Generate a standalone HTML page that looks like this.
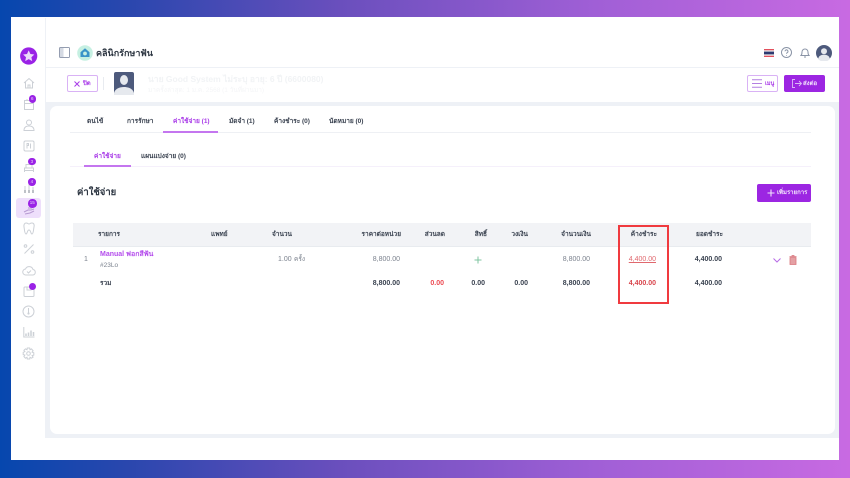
<!DOCTYPE html>
<html lang="th"><head><meta charset="utf-8"><title>คลินิกรักษาฟัน</title>
<style>
*{box-sizing:border-box}
html,body{margin:0;padding:0;width:850px;height:478px;overflow:hidden}
body{background:linear-gradient(90deg,#0647ae 0%,#2a47ae 15%,#6a4fbd 40%,#a05fd6 70%,#c86ae2 100%);font-family:"Liberation Sans","Noto Sans CJK SC",sans-serif;color:#2b3340}
.a{position:absolute}
.t{position:absolute;white-space:nowrap;font-size:7px;line-height:10px;font-weight:700;color:#3a4250;filter:blur(.3px)}
.r{text-align:right}.c{text-align:center}
.g{color:#7b828e;font-weight:400}
.p{color:#a93be8}
.b{position:absolute;width:7.500px;height:7.500px;border-radius:50%;background:#9a22e6;color:#e9d3fa;font-size:4.500px;line-height:7.500px;text-align:center}
svg{filter:blur(.25px)}
svg.i{position:absolute;fill:none;stroke:#ccd0d6;stroke-width:1}
</style></head><body>
<div class="a" style="left:11px;top:17.300px;width:828px;height:443px;background:#fff"></div>
<div class="a" style="left:45px;top:67px;width:794px;height:371px;background:#eef1f6"></div>
<div class="a" style="left:45px;top:18px;width:1px;height:49px;background:#eef1f6"></div>
<div class="a" style="left:46px;top:68px;width:793px;height:34px;background:#fff"></div>
<div class="a" style="left:49.500px;top:106px;width:785.500px;height:328px;background:#fff;border-radius:7px"></div>

<!-- sidebar -->
<svg class="a" style="left:20px;top:47px" width="18" height="18" viewBox="0 0 18 18"><circle cx="8.700" cy="9" r="8.600" fill="#9a22e6"/><path d="M8.700 3.400l1.700 3.600 3.900.5-2.900 2.700.8 3.900-3.500-2-3.500 2 .8-3.900-2.900-2.700 3.900-.5z" fill="#ecd9fb"/></svg>
<svg class="i" style="left:22.500px;top:77px" width="12" height="12" viewBox="0 0 12 12"><path d="M1 6l5-4.500L11 6M2.500 5v6h7V5M5 11V8h2v3"/></svg>
<svg class="i" style="left:23px;top:98px" width="12" height="12" viewBox="0 0 12 12"><path d="M1.500 2.500h9v9h-9zM1.500 5.500h9M4 1v2M8 1v2"/></svg>
<div class="b" style="left:28.500px;top:95px">6</div>
<svg class="i" style="left:22.500px;top:119px" width="12" height="12" viewBox="0 0 12 12"><circle cx="6" cy="3.500" r="2.500"/><path d="M1 11.500c0-3 2-4.500 5-4.500s5 1.500 5 4.500z"/></svg>
<svg class="i" style="left:22.500px;top:140px" width="12" height="12" viewBox="0 0 12 12"><rect x="1" y="1" width="10" height="10" rx="1.500"/><path d="M4 8.500v-5h1.500v2H4M7.500 3.500v5"/></svg>
<svg class="i" style="left:23px;top:161px" width="12" height="12" viewBox="0 0 12 12"><path d="M1.500 11V7h9v4M3 7V3.500h6V7M1 9.500h10"/></svg>
<div class="b" style="left:28.200px;top:157.500px">3</div>
<svg class="i" style="left:22.500px;top:182px" width="12" height="12" viewBox="0 0 12 12"><path d="M2 11V4M6 11V2M10 11V5"/><path d="M2 11V8M6 11V8M10 11V8" stroke="#a8adb6" stroke-width="1.500"/></svg>
<div class="b" style="left:28.200px;top:178.200px">4</div>
<div class="a" style="left:16px;top:198px;width:24.500px;height:19.500px;border-radius:3px;background:#eedffb"></div>
<svg class="i" style="left:23px;top:205px;stroke:#b79ad2" width="12" height="10" viewBox="0 0 12 10"><path d="M1 7l4-2h3l3-1M2 9l5-1 4-2M5 3h4"/></svg>
<div class="b" style="left:28px;top:199px;width:8.500px;height:8.500px;line-height:8.500px">15</div>
<svg class="i" style="left:22.500px;top:222px" width="12" height="13" viewBox="0 0 12 13"><path d="M3 1c2 0 2 1 3 1s1-1 3-1 2.500 2 2 4c-.5 2-.5 7-2 7S8 8 6 8s-1.500 4-3 4-1.500-5-2-7 .5-4 2-4z"/></svg>
<svg class="i" style="left:22.500px;top:243px" width="12" height="12" viewBox="0 0 12 12"><path d="M1.500 10.500l9-9"/><circle cx="2.500" cy="3" r="1.300"/><circle cx="9.500" cy="9" r="1.300"/></svg>
<svg class="i" style="left:22px;top:265px" width="14" height="11" viewBox="0 0 14 11"><path d="M4 10a3 3 0 0 1-.5-6A4 4 0 0 1 11 4.500 2.800 2.800 0 0 1 11 10zM5 6.500l1.500 1.500L9 5.500"/></svg>
<svg class="i" style="left:23px;top:285px" width="12" height="12" viewBox="0 0 12 12"><rect x="1" y="2" width="10" height="9.500" rx="1"/><path d="M4 2v3h4V2"/></svg>
<div class="a" style="left:28.500px;top:282.500px;width:7px;height:7px;border-radius:50%;background:#9a22e6"></div>
<svg class="i" style="left:22px;top:305px" width="13" height="13" viewBox="0 0 13 13"><circle cx="6.500" cy="6.500" r="5.500"/><path d="M6.500 3v4.500"/><circle cx="6.500" cy="8.500" r=".6"/></svg>
<svg class="i" style="left:22.500px;top:326px" width="12" height="12" viewBox="0 0 12 12"><path d="M.8 1v10h10.700"/><path d="M3 10V7.500M5.500 10V6.500M8 10V4.500M10.500 10V6" stroke-width="1.500"/></svg>
<svg class="i" style="left:22px;top:347px" width="13" height="13" viewBox="0 0 13 13"><circle cx="6.500" cy="6.500" r="1.800"/><path d="M5.300 1h2.400l.3 1.700 1.500-.8 1.600 1.900-1 1.300 1.700.7v2.300l-1.700.5 1 1.500L9.500 11.200 8 10.300 7.700 12H5.300L5 10.300l-1.500.9L1.900 9.600l1-1.500L1.200 7.600V5.300l1.700-.7-1-1.300L3.500 1.900 5 2.700z"/></svg>

<!-- top bar -->
<svg class="a" style="left:59px;top:47px" width="11" height="11" viewBox="0 0 11 11"><rect x=".5" y=".5" width="10" height="10" rx="1" fill="#d5dae3" stroke="#949db0"/><rect x="4.500" y="1" width="5.500" height="9" fill="#fff"/></svg>
<svg class="a" style="left:77px;top:45px" width="16" height="16" viewBox="0 0 16 16"><circle cx="8" cy="8" r="7.800" fill="#c6f0e2"/><path d="M8 3.200L3.500 7.200v4.800h9V7.200z" fill="#3a94c8"/><circle cx="8" cy="8.500" r="1.900" fill="#c6f0e2"/></svg>
<div class="t" style="left:96px;top:47px;font-size:9px;line-height:12px;color:#2d3642">คลินิกรักษาฟัน</div>
<svg class="a" style="left:763.500px;top:49px" width="10" height="8" viewBox="0 0 10 8"><rect width="10" height="8" fill="#e2505c"/><rect y="1.300" width="10" height="5.400" fill="#eee"/><rect y="2.600" width="10" height="2.800" fill="#2d3a70"/></svg>
<svg class="a" style="left:781px;top:47px" width="11" height="11" viewBox="0 0 11 11"><circle cx="5.500" cy="5.500" r="5" fill="none" stroke="#8a94a6"/><path d="M4 4.300a1.500 1.500 0 1 1 2.300 1.300c-.5.300-.8.600-.8 1.200M5.500 8v.6" fill="none" stroke="#8a94a6"/></svg>
<svg class="a" style="left:800px;top:47px" width="10" height="11" viewBox="0 0 10 11"><path d="M1 8.500c1-1 1-2 1-3.500a3 3 0 0 1 6 0c0 1.500 0 2.500 1 3.500zM4 10h2" fill="none" stroke="#8a94a6"/></svg>
<svg class="a" style="left:816px;top:45px" width="16" height="16" viewBox="0 0 16 16"><circle cx="8" cy="8" r="8" fill="#4d5a7c"/><circle cx="8" cy="6.200" r="3" fill="#e6e9ee"/><path d="M2 14c1-3.500 3-4.300 6-4.300s5 .8 6 4.300a8 8 0 0 1-12 0z" fill="#e6e9ee"/></svg>

<!-- patient bar -->
<div class="a" style="left:66.500px;top:75px;width:31px;height:17px;border:1px solid #d9b2f5;border-radius:2px"></div>
<svg class="a" style="left:74px;top:81px" width="6" height="6" viewBox="0 0 6 6"><path d="M.5.500l5 5M5.500.500l-5 5" stroke="#a93be8"/></svg>
<div class="t p" style="left:83px;top:79px;font-size:6px">ปิด</div>
<div class="a" style="left:103px;top:77px;width:1px;height:13px;background:#e8ebf0"></div>
<svg class="a" style="left:114px;top:72px" width="20" height="23" viewBox="0 0 20 23"><rect width="20" height="23" rx="2" fill="#4d5a7c"/><ellipse cx="10" cy="8" rx="4" ry="5" fill="#e6e9ee"/><path d="M0 21c1-4 5-6 10-6s9 2 10 6v2H0z" fill="#e6e9ee"/></svg>
<div class="t" style="left:148px;top:74px;font-size:8.500px;line-height:11px;color:#f1f3f5">นาย Good System ไม่ระบุ อายุ: 6 ปี (6600080)</div>
<div class="t" style="left:148px;top:86px;font-size:6.500px;color:#f4f5f7;font-weight:400">มาครั้งล่าสุด: 1 ม.ค. 2568 (1 วันที่ผ่านมา)</div>
<div class="a" style="left:747px;top:75px;width:31px;height:17px;border:1px solid #d9b2f5;border-radius:2px"></div>
<svg class="a" style="left:752px;top:79px" width="10" height="9" viewBox="0 0 10 9"><path d="M0 .7h10M0 4.500h10M0 8.300h10" stroke="#b47fe2"/></svg>
<div class="t p" style="left:765px;top:79px;font-size:5.500px">เมนู</div>
<div class="a" style="left:783.500px;top:75px;width:41px;height:17px;background:#9c26e2;border-radius:2px"></div>
<svg class="a" style="left:792px;top:79px" width="10" height="9" viewBox="0 0 10 9"><path d="M3 .5H.5v8H3M3 4.500h6.500M7 2l2.500 2.500L7 7" fill="none" stroke="#dcb8f5" stroke-width=".9"/></svg>
<div class="t" style="left:803px;top:79px;font-size:6px;color:#f1e2fc">ส่งต่อ</div>

<!-- tabs -->
<div class="a" style="left:70px;top:132px;width:741px;height:1px;background:#eef0f4"></div>
<div class="t" style="left:87px;top:117px;font-size:6.500px">ตนไข้</div>
<div class="t" style="left:127px;top:117px;font-size:6.500px">การรักษา</div>
<div class="t p" style="left:173px;top:117px;font-size:6.500px">ค่าใช้จ่าย (1)</div>
<div class="a" style="left:163px;top:131px;width:55px;height:2px;background:#c476ef"></div>
<div class="t" style="left:229px;top:117px;font-size:6.500px">มัดจำ (1)</div>
<div class="t" style="left:274px;top:117px;font-size:6.500px">ค้างชำระ (0)</div>
<div class="t" style="left:329px;top:117px;font-size:6.500px">นัดหมาย (0)</div>
<div class="a" style="left:70px;top:166px;width:741px;height:1px;background:#f5f0fb"></div>
<div class="t p" style="left:94px;top:152px;font-size:6.500px">ค่าใช้จ่าย</div>
<div class="a" style="left:84px;top:165px;width:47px;height:2px;background:#c476ef"></div>
<div class="t" style="left:141px;top:152px;font-size:6.500px">แผนแบ่งจ่าย (0)</div>

<div class="t" style="left:77px;top:187px;font-size:9.500px;line-height:12px;color:#2d3642">ค่าใช้จ่าย</div>
<div class="a" style="left:757px;top:184px;width:54px;height:18px;background:#9c26e2;border-radius:2px"></div>
<svg class="a" style="left:767px;top:189px" width="8" height="8" viewBox="0 0 8 8"><path d="M4 .5v7M.5 4h7" stroke="#f1e2fc" stroke-width="1.100"/></svg>
<div class="t" style="left:777px;top:188px;font-size:6px;color:#f1e2fc">เพิ่มรายการ</div>

<!-- table -->
<div class="a" style="left:73px;top:223px;width:738px;height:24px;background:#f2f3f6;border-bottom:1px solid #e8ebef"></div>
<div class="t" style="left:98px;top:230px;font-size:6.500px">รายการ</div>
<div class="t" style="left:211px;top:230px;font-size:6.500px">แพทย์</div>
<div class="t" style="left:272px;top:230px;font-size:6.500px">จำนวน</div>
<div class="t r" style="right:449px;top:230px;font-size:6.500px">ราคาต่อหน่วย</div>
<div class="t r" style="right:405px;top:230px;font-size:6.500px">ส่วนลด</div>
<div class="t r" style="right:363px;top:230px;font-size:6.500px">สิทธิ์</div>
<div class="t r" style="right:322px;top:230px;font-size:6.500px">วงเงิน</div>
<div class="t r" style="right:259px;top:230px;font-size:6.500px">จำนวนเงิน</div>
<div class="t r" style="right:193px;top:230px;font-size:6.500px">ค้างชำระ</div>
<div class="t r" style="right:127px;top:230px;font-size:6.500px">ยอดชำระ</div>

<div class="t g" style="left:84px;top:255px">1</div>
<div class="t p" style="left:100px;top:250px;color:#b44cec;font-size:7px">Manual ฟอกสีฟัน</div>
<div class="t g" style="left:100px;top:260.500px;font-size:6.500px">#23Lo</div>
<div class="t g" style="left:278px;top:255px">1.00</div>
<div class="t g" style="left:294px;top:255px;font-size:6.500px">ครั้ง</div>
<div class="t g r" style="right:450px;top:255px">8,800.00</div>
<svg class="a" style="left:474px;top:256px" width="8" height="8" viewBox="0 0 8 8"><path d="M4 .5v7M.5 4h7" stroke="#7fc4a0"/></svg>
<div class="t g r" style="right:260px;top:255px">8,800.00</div>
<div class="t r" style="right:194px;top:255px;color:#e0686e;font-weight:400;text-decoration:underline">4,400.00</div>
<div class="t r" style="right:128px;top:255px">4,400.00</div>
<svg class="a" style="left:773px;top:258px" width="8" height="5" viewBox="0 0 8 5"><path d="M.5.500L4 4 7.500.500" fill="none" stroke="#b76be6"/></svg>
<svg class="a" style="left:788.500px;top:255px" width="8" height="10" viewBox="0 0 8 10"><path d="M.5 1.500h7M3 1.500V.5h2v1M1 2.500h6v7H1z" fill="#e4a0a4" stroke="#d9777d" stroke-width=".8"/></svg>

<div class="t" style="left:100px;top:279px;font-size:6.500px">รวม</div>
<div class="t r" style="right:450px;top:279px">8,800.00</div>
<div class="t r" style="right:406px;top:279px;color:#ec4a52">0.00</div>
<div class="t r" style="right:365px;top:279px">0.00</div>
<div class="t r" style="right:322px;top:279px">0.00</div>
<div class="t r" style="right:260px;top:279px">8,800.00</div>
<div class="t r" style="right:194px;top:279px;color:#d9454c">4,400.00</div>
<div class="t r" style="right:128px;top:279px">4,400.00</div>

<div class="a" style="left:617.500px;top:224.500px;width:51.500px;height:79.500px;border:2px solid #f03a3f"></div>
</body></html>
